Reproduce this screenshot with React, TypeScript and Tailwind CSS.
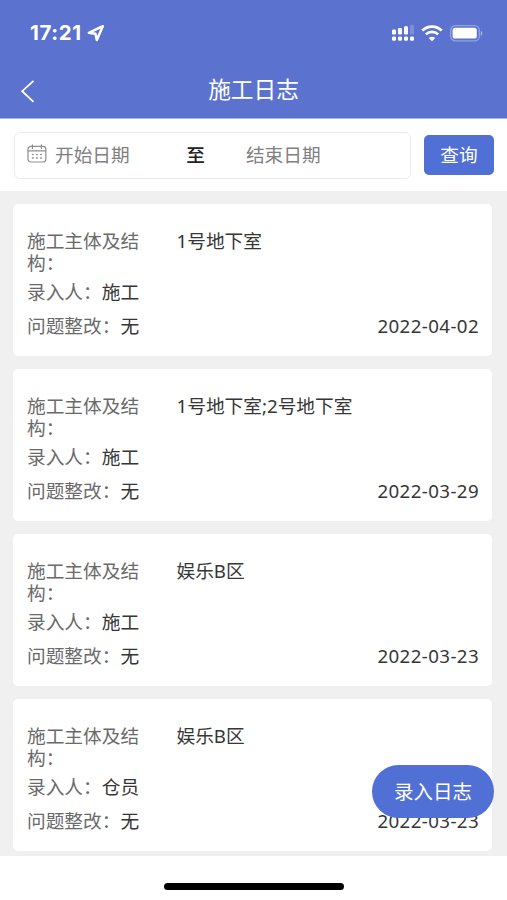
type Entry = { part: string; author: string; issue: string; date: string };

const entries: Entry[] = [
  { part: "1号地下室", author: "施工", issue: "无", date: "2022-04-02" },
  { part: "1号地下室;2号地下室", author: "施工", issue: "无", date: "2022-03-29" },
  { part: "娱乐B区", author: "施工", issue: "无", date: "2022-03-23" },
  { part: "娱乐B区", author: "仓员", issue: "无", date: "2022-03-23" },
];

function LocationArrow() {
  return (
    <svg width="18" height="18" viewBox="0 0 18 18" fill="none" stroke="#fff" strokeWidth="2.5" strokeLinejoin="round">
      <path d="M15.8 2.2 1.8 8.8 8.4 9.8 9.8 16Z" />
    </svg>
  );
}

function SignalIcon() {
  return (
    <svg width="24" height="18" viewBox="0 0 24 18" fill="#fff">
      <rect x="1" y="5.5" width="4" height="5" rx="1.2" />
      <rect x="7" y="4" width="4" height="6.5" rx="1.2" />
      <rect x="13" y="2.3" width="4" height="8.2" rx="1.2" />
      <rect x="19" y="0.8" width="4" height="9.7" rx="1.2" opacity="0.2" />
      <rect x="1" y="12.4" width="4" height="4.4" rx="1.4" />
      <rect x="7" y="12.4" width="4" height="4.4" rx="1.4" />
      <rect x="13" y="12.4" width="4" height="4.4" rx="1.4" />
      <rect x="19" y="12.4" width="4" height="4.4" rx="1.4" />
    </svg>
  );
}

function WifiIcon() {
  return (
    <svg width="22" height="17" viewBox="0 0 22 17" fill="none" stroke="#fff" strokeWidth="2.7">
      <path d="M1.3 5.6a13.9 13.9 0 0 1 19.4 0" />
      <path d="M4.9 9.4a8.8 8.8 0 0 1 12.2 0" />
      <path d="M11 16.2 7.8 13a4.6 4.6 0 0 1 6.4 0Z" fill="#fff" stroke="none" />
    </svg>
  );
}

function BatteryIcon() {
  return (
    <svg width="33" height="17" viewBox="0 0 33 17" fill="none">
      <rect x="0.7" y="0.7" width="28.6" height="15.2" rx="4.6" stroke="#fff" strokeOpacity="0.35" strokeWidth="1.3" />
      <rect x="2.6" y="2.8" width="24.2" height="10.8" rx="2.6" fill="#fff" />
      <path d="M30.8 5.8c1.9.8 1.9 4.4 0 5.2Z" fill="#fff" fillOpacity="0.5" />
    </svg>
  );
}

function CalendarIcon() {
  return (
    <svg width="20" height="19" viewBox="0 0 20 19" fill="none" stroke="#8f8f8f" strokeWidth="1.2" strokeLinecap="round">
      <rect x="1" y="2.4" width="17.8" height="15.6" rx="2.8" />
      <path d="M1 6.8h17.8M5.4.8v3.6M14.4.8v3.6" />
      <path d="M5.4 10.6h.8M9.5 10.6h.8M13.6 10.6h.8M5.4 14h.8M9.5 14h.8M13.6 14h.8" strokeWidth="1.4" />
    </svg>
  );
}

function Card({ entry }: { entry: Entry }) {
  return (
    <article className="h-[152px] shrink-0 rounded-[5px] bg-white pl-3.5 pr-[13px] pt-[26px] text-[18.7px] leading-[22px] text-[#363636]">
      <div className="flex">
        <span className="w-[113px] shrink-0 text-[#6a6a6a]">施工主体及结构：</span>
        <span className="ml-[36.5px]">{entry.part}</span>
      </div>
      <div className="mt-[7px] flex">
        <span className="text-[#6a6a6a]">录入人：</span>
        <span>{entry.author}</span>
      </div>
      <div className="mt-3 flex">
        <span className="text-[#6a6a6a]">问题整改：</span>
        <span>{entry.issue}</span>
        <span className="ml-auto tracking-[0.4px]">{entry.date}</span>
      </div>
    </article>
  );
}

export default function App() {
  return (
    <div className="relative flex h-[900px] w-[507px] flex-col overflow-hidden bg-white font-['Noto_Sans','Noto_Sans_CJK_SC',sans-serif]">
      <header className="flex h-[118px] shrink-0 flex-col bg-[#5b73cf] text-white">
        <div className="flex h-[66px] items-center pl-[30px] pr-6">
          <span className="w-[52px] whitespace-nowrap font-['Inter',sans-serif] text-[20.5px] font-bold leading-6 tracking-[0.6px]">17:21</span>
          <span className="ml-[5px]"><LocationArrow /></span>
          <span className="ml-auto"><SignalIcon /></span>
          <span className="ml-1.5"><WifiIcon /></span>
          <span className="ml-[7px]"><BatteryIcon /></span>
        </div>
        <div className="grid h-[50px] grid-cols-[1fr_auto_1fr] items-center">
          <svg className="ml-5" width="16" height="24" viewBox="0 0 16 24" fill="none" stroke="#fff" strokeWidth="1.8">
            <path d="M13.5 1.8 2.2 12.2 13.5 22.8" />
          </svg>
          <h1 className="-mt-0.5 text-[22.7px] leading-8">施工日志</h1>
        </div>
      </header>
      <section className="flex h-[73px] shrink-0 items-center border-t border-[#a9b6ea] pl-3.5 pr-[13px]">
        <div className="flex h-[47px] w-[397px] items-center rounded-md border-[1.5px] border-[#ebebeb] pl-3 text-[18.7px] leading-6 text-[#808080]">
          <span className="-mt-1"><CalendarIcon /></span>
          <span className="ml-[8px]">开始日期</span>
          <span className="ml-[56.5px] font-medium text-[#222]">至</span>
          <span className="ml-[41px]">结束日期</span>
        </div>
        <button className="ml-[13px] h-10 w-[70px] rounded-[5px] bg-[#5170d6] text-[18.7px] leading-6 text-white">查询</button>
      </section>
      <main className="flex h-[665px] shrink-0 flex-col gap-[13px] overflow-hidden bg-[#f0f0f0] pl-[13px] pr-[15px] pt-[13px]">
        {entries.map((entry, i) => <Card key={i} entry={entry} />)}
      </main>
      <footer className="flex flex-1 justify-center bg-white pl-px pt-[27px]">
        <div className="h-[7px] w-[180px] rounded-full bg-black" />
      </footer>
      <button className="absolute left-[372px] top-[765px] h-[53px] w-[122px] rounded-full bg-[#5170d6] text-[19.5px] leading-6 text-white">录入日志</button>
    </div>
  );
}
